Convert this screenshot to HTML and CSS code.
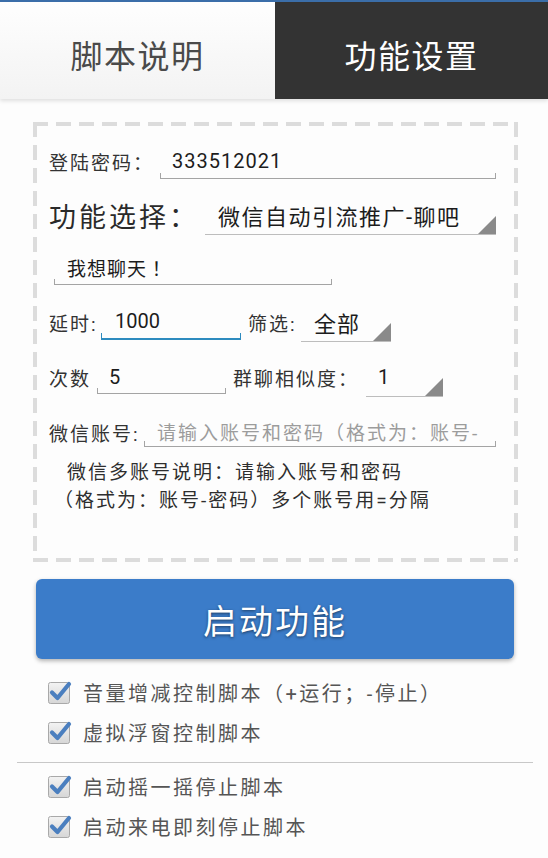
FILE: index.html
```html
<!DOCTYPE html>
<html lang="zh">
<head>
<meta charset="utf-8">
<link rel="stylesheet" href="styles.css">
</head>
<body>
<div class="tabs">
  <div class="tab tab-left">脚本说明</div>
  <div class="tab tab-right">功能设置</div>
</div>

<div class="panel">
  <div class="row r1">
    <span class="lbl w-pass">登陆密码<span class="pc">：</span></span>
    <span class="edit e-pass">333512021</span>
  </div>
  <div class="row r2">
    <span class="lbl big w-func">功能选择<span class="pc">：</span></span>
    <span class="spin s-func">微信自动引流推广-聊吧</span>
  </div>
  <div class="row r3">
    <span class="edit e-msg">我想聊天<span class="pc">！</span></span>
  </div>
  <div class="row r4">
    <span class="lbl w-delay">延时:</span>
    <span class="edit focus e-delay">1000</span>
    <span class="lbl w-filter">筛选:</span>
    <span class="spin s-filter">全部</span>
  </div>
  <div class="row r5">
    <span class="lbl w-count">次数</span>
    <span class="edit e-count">5</span>
    <span class="lbl w-sim">群聊相似度<span class="pc">：</span></span>
    <span class="spin s-sim">1</span>
  </div>
  <div class="row r6">
    <span class="lbl w-acc">微信账号:</span>
    <span class="edit e-acc"><span class="ph">请输入账号和密码<span class="pc">（</span>格式为<span class="pc">：</span>账号-</span></span>
  </div>
  <p class="note"><span class="first">微信多账号说明<span class="pc">：</span>请输入账号和密码</span><br><span class="pc">（</span>格式为<span class="pc">：</span>账号-密码<span class="pc">）</span>多个账号用=分隔</p>
</div>

<div class="start">启动功能</div>

<div class="checks">
  <div class="check"><svg class="cb" viewBox="0 0 26 26" width="26" height="26"><defs><linearGradient id="g" x1="0" y1="0" x2="0" y2="1"><stop offset="0" stop-color="#f3f3f3"/><stop offset="1" stop-color="#d6d6d6"/></linearGradient></defs><rect x="1.5" y="3.5" width="21" height="21" rx="2" fill="url(#g)" stroke="#a9a9a9"/><path d="M5 13.5 L10.5 19 L22 5" fill="none" stroke="#4b7fbf" stroke-width="4.2" stroke-linecap="round" stroke-linejoin="round"/></svg><span>音量增减控制脚本<span class="pc">（</span>+运行<span class="pc">；</span>-停止<span class="pc">）</span></span></div>
  <div class="check"><svg class="cb" viewBox="0 0 26 26" width="26" height="26"><rect x="1.5" y="3.5" width="21" height="21" rx="2" fill="url(#g)" stroke="#a9a9a9"/><path d="M5 13.5 L10.5 19 L22 5" fill="none" stroke="#4b7fbf" stroke-width="4.2" stroke-linecap="round" stroke-linejoin="round"/></svg><span>虚拟浮窗控制脚本</span></div>
  <div class="divider"></div>
  <div class="check"><svg class="cb" viewBox="0 0 26 26" width="26" height="26"><rect x="1.5" y="3.5" width="21" height="21" rx="2" fill="url(#g)" stroke="#a9a9a9"/><path d="M5 13.5 L10.5 19 L22 5" fill="none" stroke="#4b7fbf" stroke-width="4.2" stroke-linecap="round" stroke-linejoin="round"/></svg><span>启动摇一摇停止脚本</span></div>
  <div class="check"><svg class="cb" viewBox="0 0 26 26" width="26" height="26"><rect x="1.5" y="3.5" width="21" height="21" rx="2" fill="url(#g)" stroke="#a9a9a9"/><path d="M5 13.5 L10.5 19 L22 5" fill="none" stroke="#4b7fbf" stroke-width="4.2" stroke-linecap="round" stroke-linejoin="round"/></svg><span>启动来电即刻停止脚本</span></div>
</div>
</body>
</html>
```

FILE: styles.css
```css
* { box-sizing: border-box; }

body {
  margin: 0;
  width: 548px;
  height: 858px;
  overflow: hidden;
  background: #fdfdfd;
  font-family: Roboto, "Noto Sans CJK SC", sans-serif;
  color: #2a2a2a;
}

/* centred full-width punctuation, as on the device */
.pc {
  font-family: "Noto Sans CJK TC", "Noto Sans CJK SC", sans-serif;
}

/* ---------- tabs ---------- */
.tabs {
  display: flex;
  height: 99px;
  border-top: 2px solid #3b6ea9;
  box-shadow: 0 2px 4px rgba(0, 0, 0, 0.12);
}

.tab {
  display: flex;
  align-items: center;
  justify-content: center;
  padding-top: 7px;
  font-size: 32px;
  letter-spacing: 1.5px;
}

.tab-left {
  width: 275px;
  background: linear-gradient(#fefefe, #f3f3f3);
  color: #4a4a4a;
}

.tab-right {
  flex: 1;
  background: #333333;
  color: #ffffff;
}

/* ---------- dashed panel ---------- */
.panel {
  margin: 23px 0 0 33px;
  width: 485px;
  height: 440px;
  padding: 19px 22px 0 16px;
  background:
    repeating-linear-gradient(90deg, #dcdcdc 0 15px, transparent 15px 23px) left top / 100% 4px no-repeat,
    repeating-linear-gradient(90deg, #dcdcdc 0 15px, transparent 15px 23px) left bottom / 100% 4px no-repeat,
    repeating-linear-gradient(180deg, #dcdcdc 0 15px, transparent 15px 23px) left top / 4px 100% no-repeat,
    repeating-linear-gradient(180deg, #dcdcdc 0 15px, transparent 15px 23px) right top / 4px 100% no-repeat;
}

.row {
  display: flex;
  align-items: center;
}

.r1 { height: 40px; }
.r2 { height: 44px; margin-top: 12px; }
.r3 { height: 36px; margin-top: 13px; }
.r4 { height: 40px; margin-top: 16px; }
.r5 { height: 40px; margin-top: 15px; }
.r6 { height: 36px; margin-top: 17px; }

.lbl {
  flex: none;
  font-size: 19px;
  letter-spacing: 2px;
  color: #333;
  white-space: nowrap;
}

.lbl.big {
  font-size: 27px;
  letter-spacing: 3px;
  color: #2a2a2a;
}

.w-pass { width: 111px; }
.w-func { width: 156px; }
.w-delay { width: 52px; }
.w-filter { width: 53px; margin-left: 7px; }
.w-count { width: 48px; }
.w-sim { width: 133px; margin-left: 7px; }
.w-acc { width: 95px; }

/* ---------- edit texts ---------- */
.edit {
  position: relative;
  flex: none;
  display: flex;
  align-items: center;
  border-bottom: 1.5px solid #a4a4a4;
  white-space: nowrap;
  overflow: hidden;
  color: #1c1c1c;
}

.edit::after {
  content: "";
  position: absolute;
  left: 0;
  right: 0;
  bottom: 0;
  height: 5px;
  border-left: 1.5px solid #a4a4a4;
  border-right: 1.5px solid #a4a4a4;
}

.edit.focus {
  border-bottom: 2px solid #2d8bbf;
}

.edit.focus::after {
  border-color: #2d8bbf;
}

.e-pass {
  width: 336px;
  height: 35px;
  padding-left: 12px;
  font-size: 20px;
  letter-spacing: 1px;
}

.e-msg {
  width: 278px;
  height: 34px;
  margin-left: 5px;
  padding-left: 13px;
  font-size: 19px;
  letter-spacing: 1px;
}

.e-delay {
  width: 140px;
  height: 36px;
  padding-left: 14px;
  font-size: 20px;
}

.e-count {
  width: 129px;
  height: 34px;
  padding-left: 12px;
  font-size: 20px;
}

.e-acc {
  width: 352px;
  height: 30px;
  padding-left: 13px;
  font-size: 19px;
  letter-spacing: 2px;
}

.ph { color: #9c9c9c; }

/* ---------- spinners ---------- */
.spin {
  position: relative;
  flex: none;
  display: flex;
  align-items: center;
  border-bottom: 1px solid #bdbdbd;
  white-space: nowrap;
  color: #1c1c1c;
}

.spin::after {
  content: "";
  position: absolute;
  right: 0;
  bottom: 0;
  width: 18px;
  height: 18px;
  background: #8a8a8a;
  clip-path: polygon(100% 0, 100% 100%, 0 100%);
}

.s-func {
  width: 291px;
  height: 40px;
  padding-left: 13px;
  font-size: 22px;
  letter-spacing: 1.5px;
}

.s-filter {
  width: 90px;
  height: 40px;
  padding-left: 13px;
  font-size: 22px;
  letter-spacing: 1px;
}

.s-sim {
  width: 77px;
  height: 40px;
  padding-left: 12px;
  font-size: 20px;
}

/* ---------- note ---------- */
.note {
  margin: 8px 0 0 5px;
  font-size: 19px;
  line-height: 26px;
  letter-spacing: 2px;
  color: #2e2e2e;
  white-space: nowrap;
}

.note .first { padding-left: 13px; }

/* ---------- start button ---------- */
.start {
  margin: 17px 0 0 36px;
  width: 478px;
  height: 80px;
  border-radius: 6px;
  background: #3b7cc9;
  box-shadow: 0 2px 4px rgba(0, 0, 0, 0.3);
  display: flex;
  align-items: center;
  justify-content: center;
  color: #ffffff;
  font-size: 34px;
  letter-spacing: 2px;
  text-shadow: 0 1px 3px rgba(0, 0, 0, 0.55);
}

/* ---------- checkboxes ---------- */
.checks {
  margin-top: 13px;
}

.check {
  display: flex;
  align-items: center;
  height: 40px;
  padding-left: 47px;
  gap: 10px;
  font-size: 20px;
  letter-spacing: 2.5px;
  color: #555555;
}

.cb {
  flex: none;
  overflow: visible;
}

.divider {
  margin: 10px 0 3px 17px;
  width: 516px;
  height: 1px;
  background: #c8c8c8;
}
```
